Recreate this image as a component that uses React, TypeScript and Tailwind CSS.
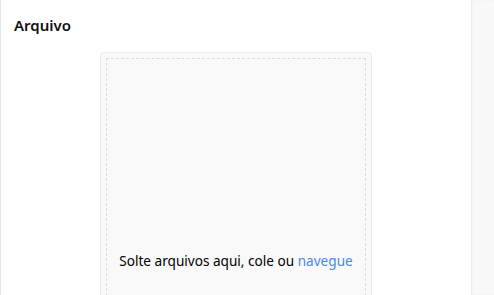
export default function App() {
  return (
    <div className="flex h-[295px] w-[494px] overflow-hidden bg-white font-['Noto_Sans',sans-serif] text-[#111]">
      {/* main panel */}
      <div className="flex w-[471px] shrink-0 flex-col border-l border-[#e6e6e6] pt-[14px]">
        <h2 className="pl-[13px] text-[15px] font-semibold leading-[22px]">Arquivo</h2>
        <div className="mt-[16px] flex justify-center">
          <div className="h-[300px] w-[272px] rounded-[4px] border border-[#ececec] bg-[#f9f9f9] p-[5px]">
            <div className="flex h-full flex-col items-center border border-dashed border-[#dcdcdc] pt-[192px]">
              <p className="text-[13.6px] leading-[20px] text-black">
                Solte arquivos aqui, cole ou{" "}
                <button className="text-[#4a86e8]">navegue</button>
              </p>
            </div>
          </div>
        </div>
      </div>
      {/* side strip */}
      <div className="flex-1 bg-[#f8f8f8] shadow-[inset_1px_0_2px_rgba(0,0,0,0.06)]" />
    </div>
  );
}
